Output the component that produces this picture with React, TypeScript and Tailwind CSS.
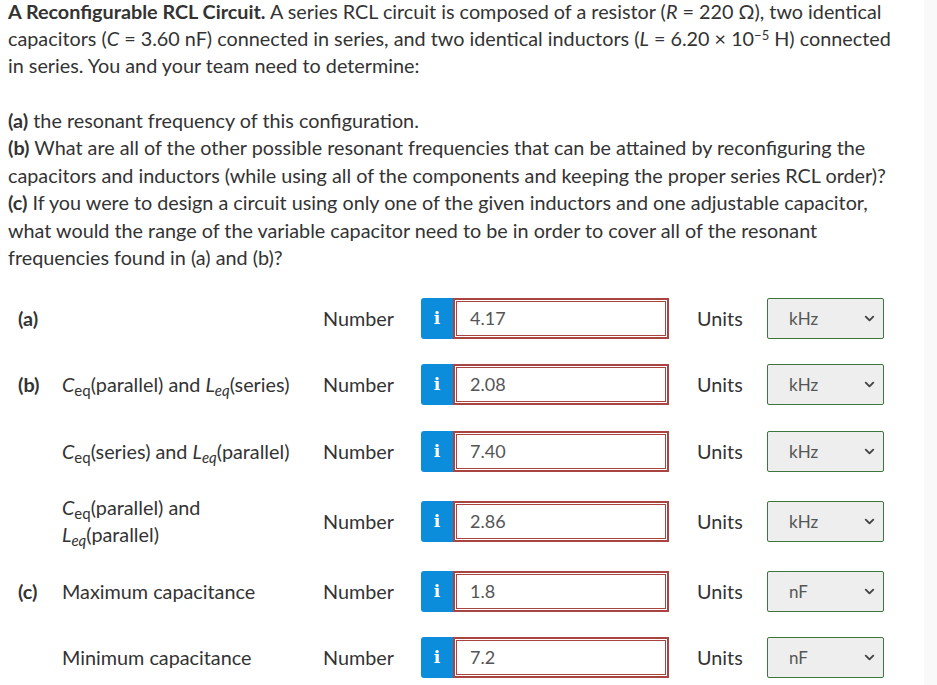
import { ChevronDown } from 'lucide-react'

const font = { fontFamily: 'Lato, "Noto Sans", sans-serif' }

function Ceq() {
  return (
    <>
      <i>C</i>
      <sub className="text-[15px]">eq</sub>
    </>
  )
}

function Leq() {
  return (
    <>
      <i>L</i>
      <sub className="text-[15px] italic">eq</sub>
    </>
  )
}

interface RowProps {
  tag?: string
  label?: React.ReactNode
  value: string
  unit: string
  className?: string
}

function AnswerRow({ tag, label, value, unit, className }: RowProps) {
  return (
    <div className={`flex items-center ${className ?? ''}`}>
      <div className="w-[54px] pl-[10px] font-bold">{tag}</div>
      <div className="w-[251px] leading-[27px]">{label}</div>
      <div className="w-[108px] pl-[10px]">Number</div>
      <div className="flex h-[41px]">
        <div className="w-[32px] h-full bg-[#0b8ddc] rounded-l-[3px] flex items-center justify-center text-white font-bold text-[17px]" style={{ fontFamily: '"DejaVu Serif", serif' }}>
          i
        </div>
        <div className="w-[216px] h-full border-2 border-[#a94442] shadow-[inset_0_0_0_1px_#fff,inset_0_0_0_2px_#a94442] flex items-center pl-[15px] text-[18px] text-[#555]">
          {value}
        </div>
      </div>
      <div className="w-[98px] pl-[28px]">Units</div>
      <div className="w-[117px] h-[41px] border border-[#3c763d] bg-[#eeeeee] rounded-[2px] flex items-center justify-between pl-[21px] pr-[6px] text-[17px] text-[#555]">
        <span>{unit}</span>
        <ChevronDown size={15} strokeWidth={3} className="text-[#444]" />
      </div>
    </div>
  )
}

export default function App() {
  return (
    <div className="flex w-[937px] h-[685px] overflow-hidden bg-white text-[#333] text-[19.8px]" style={font}>
      <div className="flex-1 pl-[8px] pt-0">
        <p className="leading-[27px] -mt-[2px]">
          <b>A Reconfigurable RCL Circuit.</b> A series RCL circuit is composed of a resistor (<i>R</i> = 220 Ω), two identical
          <br />
          capacitors (<i>C</i> = 3.60 nF) connected in series, and two identical inductors (<i>L</i> = 6.20 × 10
          <sup className="text-[13px]">−5</sup> H) connected
          <br />
          in series. You and your team need to determine:
        </p>
        <p className="leading-[27.4px] mt-[28px]">
          <b>(a)</b> the resonant frequency of this configuration.
          <br />
          <b>(b)</b> What are all of the other possible resonant frequencies that can be attained by reconfiguring the
          <br />
          capacitors and inductors (while using all of the components and keeping the proper series RCL order)?
          <br />
          <b>(c)</b> If you were to design a circuit using only one of the given inductors and one adjustable capacitor,
          <br />
          what would the range of the variable capacitor need to be in order to cover all of the resonant
          <br />
          frequencies found in (a) and (b)?
        </p>
        <div className="flex flex-col mt-[27px]">
          <AnswerRow tag="(a)" value="4.17" unit="kHz" />
          <AnswerRow
            tag="(b)"
            className="mt-[25px]"
            label={
              <>
                <Ceq />(parallel) and <Leq />(series)
              </>
            }
            value="2.08"
            unit="kHz"
          />
          <AnswerRow
            className="mt-[26px]"
            label={
              <>
                <Ceq />(series) and <Leq />(parallel)
              </>
            }
            value="7.40"
            unit="kHz"
          />
          <AnswerRow
            className="mt-[22px]"
            label={
              <>
                <Ceq />(parallel) and
                <br />
                <Leq />(parallel)
              </>
            }
            value="2.86"
            unit="kHz"
          />
          <AnswerRow tag="(c)" className="mt-[23px]" label="Maximum capacitance" value="1.8" unit="nF" />
          <AnswerRow className="mt-[25px]" label="Minimum capacitance" value="7.2" unit="nF" />
        </div>
      </div>
      <div className="w-[13px] bg-[#f9f9f9]" />
    </div>
  )
}
